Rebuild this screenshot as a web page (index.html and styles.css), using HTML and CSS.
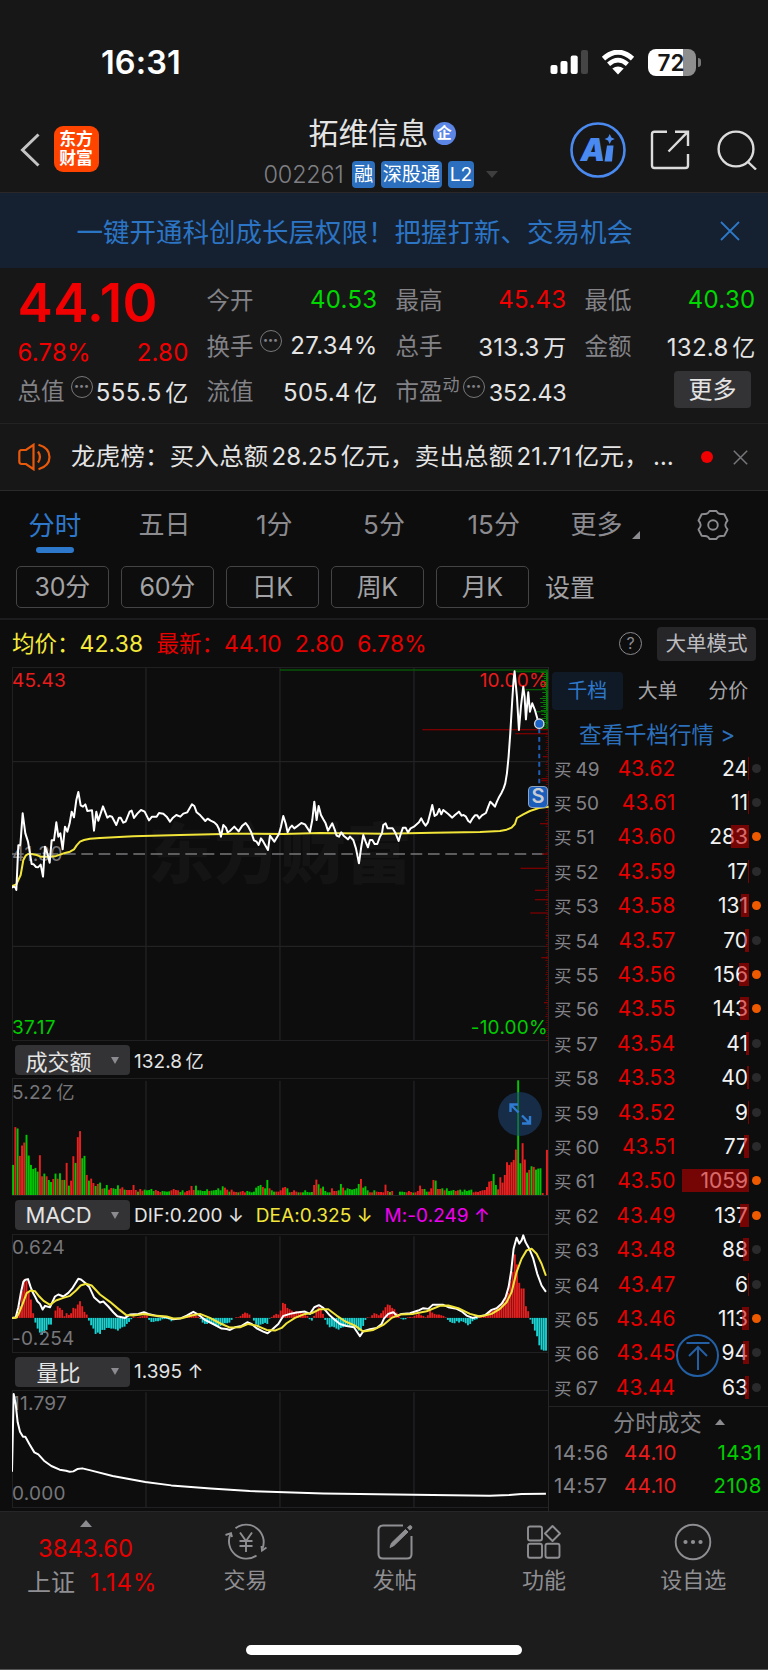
FILE: index.html
```html
<!DOCTYPE html>
<html lang="zh-CN">
<head>
    <meta charset="UTF-8">
    <title>拓维信息 002261</title>
    <link rel="stylesheet" href="styles.css">
</head>
<body>
    <div class="status-bar">
        <div class="clock">16:31</div>
        <svg class="signal" width="38" height="25" viewBox="0 0 38 25">
            <rect x="0.5" y="15" width="7" height="9" rx="2" fill="#fff"/>
            <rect x="10.5" y="11" width="7" height="13" rx="2" fill="#fff"/>
            <rect x="20.7" y="5.5" width="7" height="18.5" rx="2" fill="#fff"/>
            <rect x="31" y="0" width="7" height="24" rx="2" fill="#454545"/>
        </svg>
        <svg class="wifi" width="34" height="25" viewBox="0 0 34 25">
            <path d="M2.5 8.6 Q17 -4.2 31.5 8.6" fill="none" stroke="#fff" stroke-width="5"/>
            <path d="M7.6 14.2 Q17 6 26.4 14.2" fill="none" stroke="#fff" stroke-width="4.6"/>
            <path d="M11.3 18.6 Q17 14.4 22.7 18.6 L17 24.5 Z" fill="#fff"/>
        </svg>
        <div class="battery"><span>72</span></div>
        <div class="battery-cap"></div>
    </div>

    <header class="title-bar">
        <svg class="back" width="20" height="34" viewBox="0 0 20 34">
            <path d="M18.5 1.5 L2.5 17 L18.5 32.5" fill="none" stroke="#c4c4c4" stroke-width="3"/>
        </svg>
        <div class="app-logo">东方<br>财富</div>
        <div class="stock">
            <div class="stock-name">拓维信息<span class="badge">企</span></div>
            <div class="stock-meta">
                <span class="code">002261</span>
                <span class="tag">融</span>
                <span class="tag">深股通</span>
                <span class="tag">L2</span>
                <i class="caret"></i>
            </div>
        </div>
        <div class="actions">
            <svg width="56" height="56" viewBox="0 0 56 56">
                <circle cx="28" cy="28" r="26.5" fill="none" stroke="#4a8af0" stroke-width="2.6"/>
                <text class="ai-text" x="10.5" y="38.5">A</text>
                <path d="M37 23.5 H43.5 L42 39.5 H34.5 Z" fill="#4a8af0"/>
                <path d="M39.7 12 L41.4 15.4 L44.8 17 L41.4 18.6 L39.7 22 L38 18.6 L34.6 17 L38 15.4 Z" fill="#4a8af0"/>
            </svg>
            <svg width="40" height="40" viewBox="0 0 40 40" fill="none" stroke="#dcdcdc" stroke-width="2.4">
                <path d="M17 1.7 H4.5 Q2 1.7 2 4.2 V35.5 Q2 38 4.5 38 H35.5 Q38 38 38 35.5 V24"/>
                <path d="M25 1.7 H38 V16 M37.5 2.2 L18.5 21.5"/>
            </svg>
            <svg width="40" height="40" viewBox="0 0 40 40" fill="none" stroke="#dcdcdc" stroke-width="2.4">
                <circle cx="19" cy="19" r="17.4"/>
                <path d="M30.5 31.5 L39 39.5"/>
            </svg>
        </div>
    </header>

    <div class="banner">
        <span>一键开通科创成长层权限！把握打新、交易机会</span>
        <svg width="20" height="20" viewBox="0 0 20 20"><path d="M1 1 L19 19 M19 1 L1 19" stroke="#2e78c8" stroke-width="1.8"/></svg>
    </div>

    <section class="quote">
        <div class="price-box">
            <div class="price">44.10</div>
            <div class="change"><span>6.78%</span><span>2.80</span></div>
        </div>
        <div class="cell"><label>今开</label><b class="down">40.53</b></div>
        <div class="cell"><label>最高</label><b class="up">45.43</b></div>
        <div class="cell"><label>最低</label><b class="down">40.30</b></div>
        <div class="cell"><label>换手</label><i class="dots">•••</i><b>27.34%</b></div>
        <div class="cell"><label>总手</label><b>313.3<em>万</em></b></div>
        <div class="cell"><label>金额</label><b>132.8<em>亿</em></b></div>
        <div class="cell"><label>总值</label><i class="dots">•••</i><b>555.5<em>亿</em></b></div>
        <div class="cell"><label>流值</label><b>505.4<em>亿</em></b></div>
        <div class="cell"><label>市盈<sup>动</sup></label><i class="dots dots-pe">•••</i><b class="pe">352.43</b></div>
        <div class="cell"><button class="more">更多</button></div>
    </section>

    <div class="news">
        <svg width="33" height="28" viewBox="0 0 33 28" fill="none" stroke="#e8590c" stroke-width="2.2">
            <path d="M15.5 1.8 V26.2 L8 21 H3.5 Q1.3 21 1.3 18.5 V9.5 Q1.3 7 3.5 7 H8 Z"/>
            <path d="M20 8.5 Q23.8 14 20 19.5"/>
            <path d="M20.5 1.8 Q31.5 5 31.5 14 Q31.5 23 20.5 26.2"/>
        </svg>
        <span class="news-text">龙虎榜：买入总额<u>28.25</u>亿元，卖出总额<u>21.71</u>亿元，<u>…</u></span>
        <i class="red-dot"></i>
        <svg width="15" height="15" viewBox="0 0 15 15"><path d="M0.8 0.8 L14.2 14.2 M14.2 0.8 L0.8 14.2" stroke="#77777b" stroke-width="1.5"/></svg>
    </div>

    <nav class="tabs">
        <div class="tab active">分时</div>
        <div class="tab">五日</div>
        <div class="tab">1分</div>
        <div class="tab">5分</div>
        <div class="tab">15分</div>
        <div class="tab tab-more">更多<i></i></div>
        <div class="tab">
            <svg width="32" height="32" viewBox="0 0 32 32" fill="none" stroke="#8b8b90" stroke-width="1.9">
                <path d="M12.5 2 H19.5 Q21 5.5 24.8 5 L27.3 5.2 L30.5 11.5 Q28.3 14 28.3 16 Q28.3 18 30.5 20.5 L27.3 26.8 L24.8 27 Q21 26.5 19.5 30 H12.5 Q11 26.5 7.2 27 L4.7 26.8 L1.5 20.5 Q3.7 18 3.7 16 Q3.7 14 1.5 11.5 L4.7 5.2 L7.2 5 Q11 5.5 12.5 2 Z" stroke-linejoin="round"/>
                <circle cx="16" cy="16" r="4.8"/>
            </svg>
        </div>
    </nav>
    <div class="periods">
        <button>30分</button>
        <button>60分</button>
        <button>日K</button>
        <button>周K</button>
        <button>月K</button>
        <span>设置</span>
    </div>

    <div class="avg-row">
        <span class="avg">均价：<b>42.38</b></span>
        <span class="last">最新：<b>44.10</b><b>2.80</b><b>6.78%</b></span>
        <i class="help">?</i>
        <button class="mode">大单模式</button>
    </div>

    <main class="board">
        <div class="charts">
            <div class="pane pane-price">
                <div class="watermark">东方财富</div>
                <svg viewBox="36 21 1610 1122" preserveAspectRatio="none">
                    <path class="grid" d="M438 21 V1143 M840 21 V1143 M1242 21 V1143 M36 305 H1646 M36 859 H1646"/>
                    <path class="zero" d="M36 582 H1646"/>
                    <g id="depth"></g>
                </svg>
                <span class="lbl lt red">45.43</span>
                <span class="lbl rt red">10.00%</span>
                <span class="lbl lm">41.30</span>
                <svg viewBox="36 21 1610 1122" preserveAspectRatio="none">
                    <polyline class="line-avg" points="36,678 49,673 55,660 62,645 70,600 77,587 84,582 95,582 110,585 122,590 150,590 165,589 180,584 195,579 210,575 222,568 230,556 240,545 252,540 270,536 300,534 400,529 540,525 700,521 850,522 960,519 1152,521 1300,518 1440,516 1500,513 1520,509 1535,503 1545,492 1551,474 1570,463 1590,453 1617,444 1646,440"/>
                    <polyline class="line-price" points="36,683 41,680 46,682 49,690 55,556 61,556 68,460 76,520 84,545 90,580 95,612 101,613 108,621 114,622 122,614 129,650 135,560 142,580 149,608 155,541 162,541 169,487 175,530 181,520 188,568 195,500 202,515 209,490 215,455 222,472 229,420 235,396 242,436 249,440 256,433 262,453 276,451 282,512 289,455 295,482 309,439 322,473 329,468 336,470 349,495 357,473 362,473 370,488 377,485 389,455 395,452 402,474 412,461 423,450 434,455 447,481 456,470 470,470 477,459 490,461 500,470 510,485 519,473 529,465 541,470 550,461 562,457 576,433 583,438 590,457 601,466 616,483 623,476 632,482 643,487 651,495 657,507 663,530 670,495 678,503 683,517 690,513 703,500 716,514 727,497 737,489 745,500 753,515 762,541 770,545 776,555 783,535 790,545 804,570 810,527 823,545 837,522 843,500 850,468 857,490 863,517 870,503 876,497 883,505 890,500 904,489 915,493 930,516 937,480 943,425 950,480 956,438 963,465 970,478 977,490 984,512 997,490 1004,508 1010,527 1017,530 1024,517 1031,527 1044,538 1050,530 1060,540 1068,565 1077,610 1084,560 1090,525 1097,545 1104,562 1110,540 1117,540 1124,552 1132,552 1140,530 1146,520 1150,495 1157,490 1163,505 1178,505 1187,520 1196,543 1203,520 1209,503 1217,503 1224,517 1232,505 1242,500 1257,487 1264,475 1270,487 1277,497 1284,487 1291,460 1297,435 1304,468 1311,463 1318,447 1324,463 1330,450 1345,462 1357,473 1365,465 1377,455 1385,467 1391,465 1398,470 1405,483 1411,487 1418,475 1425,466 1432,466 1438,475 1446,466 1458,459 1465,440 1471,425 1478,432 1485,440 1491,425 1498,410 1505,398 1511,385 1516,370 1521,340 1526,290 1531,220 1537,120 1541,60 1544,34 1551,110 1557,210 1563,140 1570,80 1574,110 1578,178 1582,130 1585,97 1590,155 1597,130 1605,150 1612,175 1617,190"/>
                    <path class="sell-guide" d="M1618 206 V400"/>
                    <circle cx="1618" cy="191" r="14" fill="#1a62c4" stroke="#d8d8d8" stroke-width="4"/>
                </svg>
                <span class="sell-mark">S</span>
                <span class="lbl lb green">37.17</span>
                <span class="lbl rb green">-10.00%</span>
            </div>

            <div class="ind-row"><button class="ind"><span>成交额</span><i></i></button><p>132.8<em>亿</em></p></div>
            <div class="pane pane-vol">
                <span class="lbl lt">5.22<em>亿</em></span>
                <svg viewBox="36 115 1610 353" preserveAspectRatio="none">
                    <path class="grid" d="M438 123 V468 M840 123 V468 M1242 123 V468"/>
                    <g id="volume"></g>
                </svg>
                <div class="expand">
                    <svg width="24" height="24" viewBox="0 0 24 24" fill="none" stroke="#2f7bd0" stroke-width="2.4">
                        <path d="M2.5 10 V2.5 H10 M3 3 L10.5 10.5 M22 14 V21.5 H14 M21.5 21 L14 13.5"/>
                    </svg>
                </div>
            </div>

            <div class="ind-row"><button class="ind"><span>MACD</span><i></i></button><p>DIF:0.200 ↓</p><p class="yellow">DEA:0.325 ↓</p><p class="magenta">M:-0.249 ↑</p></div>
            <div class="pane pane-macd">
                <svg viewBox="36 581 1610 356" preserveAspectRatio="none">
                    <path class="grid" d="M438 588 V932 M840 588 V932 M1242 588 V932"/>
                    <g id="macd"></g>
                </svg>
                <span class="lbl lt">0.624</span>
                <span class="lbl lb">-0.254</span>
                <svg viewBox="36 581 1610 356" preserveAspectRatio="none">
                    <polyline class="line-price" points="36,832 47,831 55,800 62,760 70,724 76,718 84,716 92,740 98,755 105,768 112,782 120,790 128,807 135,796 142,798 150,800 157,785 165,768 175,762 190,768 205,757 218,742 235,715 243,717 255,727 268,740 282,770 300,786 310,783 325,798 340,815 352,827 375,832 390,822 415,820 432,815 445,820 470,826 500,830 520,836 540,834 560,825 580,814 595,822 615,838 635,848 650,856 665,864 680,865 690,868 705,860 725,856 742,845 755,850 770,863 790,873 803,878 815,868 835,850 850,826 870,820 890,816 915,813 930,820 943,800 957,794 970,802 990,825 1005,838 1020,850 1040,856 1062,860 1080,887 1090,872 1110,866 1130,862 1145,850 1152,834 1165,820 1180,815 1192,826 1205,820 1230,818 1255,810 1270,803 1285,805 1298,793 1330,793 1345,800 1370,805 1385,812 1400,825 1418,832 1435,828 1455,824 1475,808 1490,803 1505,790 1517,770 1526,740 1534,690 1541,625 1550,592 1558,610 1565,600 1570,585 1577,606 1588,625 1600,655 1612,700 1625,735 1638,754"/>
                    <polyline class="line-avg" points="36,832 50,831 58,815 68,790 80,758 92,750 105,752 118,768 132,782 150,793 168,780 190,772 210,766 228,750 242,735 258,730 275,735 300,762 330,784 355,805 378,823 400,825 432,820 460,825 500,828 520,834 545,833 575,825 600,820 630,832 660,848 690,861 720,860 745,850 770,855 800,868 825,870 845,862 860,848 885,832 915,820 935,818 960,806 985,806 1010,825 1035,842 1065,855 1090,873 1120,868 1150,853 1175,832 1200,822 1240,820 1280,812 1320,796 1345,795 1375,803 1410,820 1440,828 1475,820 1500,805 1520,785 1535,755 1550,695 1565,655 1580,630 1595,625 1610,640 1625,670 1638,706"/>
                </svg>
            </div>

            <div class="ind-row"><button class="ind"><span>量比</span><i></i></button><p>1.395 ↑</p></div>
            <div class="pane pane-ratio">
                <span class="lbl lt">11.797</span>
                <span class="lbl lb">0.000</span>
                <svg viewBox="36 118 1610 355" preserveAspectRatio="none">
                    <path class="grid" d="M438 125 V470 M840 125 V470 M1242 125 V470"/>
                    <polyline class="line-price" points="36,363 41,130 47,160 53,215 60,243 69,258 76,258 88,280 103,305 115,311 132,330 154,346 179,357 198,360 209,363 220,362 232,355 247,353 272,359 338,376 436,394 514,404 632,413 749,421 970,428 1242,432 1469,435 1528,433 1565,430 1638,429"/>
                </svg>
            </div>
        </div>

        <aside class="book">
            <div class="book-tabs"><span class="on">千档</span><span>大单</span><span>分价</span></div>
            <div class="book-link">查看千档行情 &gt;</div>
            <div id="orders"></div>
            <div class="ticks">
                <div class="ticks-title">分时成交<i></i></div>
                <div class="tick"><span>14:56</span><b>44.10</b><em>1431</em></div>
                <div class="tick"><span>14:57</span><b>44.10</b><em>2108</em></div>
            </div>
            <div class="to-top">
                <svg width="24" height="30" viewBox="0 0 24 30" fill="none" stroke="#235fa5" stroke-width="2">
                    <path d="M0.5 2 H23.5 M12 6 V29 M3 15 L12 6 L21 15"/>
                </svg>
            </div>
        </aside>
    </main>

    <footer class="bottom-bar">
        <div class="index">
            <i></i>
            <div class="index-val">3843.60</div>
            <div class="index-name">上证<b>1.14%</b></div>
        </div>
        <div class="item">
            <svg width="42" height="38" viewBox="0 0 42 38" fill="none" stroke="#8f8f93" stroke-width="1.9">
                <path d="M10.5 5.3 A17.5 17.5 0 0 1 37.5 25.5"/>
                <path d="M31.5 32.5 A17.5 17.5 0 0 1 5.5 11"/>
                <path d="M0.5 12 L6 10.2 L7 14 M41.5 24.5 L37 27.5 L36.5 23"/>
                <path d="M15 9.5 L21 18 L27 9.5 M21 18 V29 M14.5 18 H27.5 M14.5 23 H27.5"/>
            </svg>
            <span>交易</span>
        </div>
        <div class="item">
            <svg width="38" height="38" viewBox="0 0 38 38" fill="none" stroke="#8f8f93" stroke-width="2">
                <path d="M27 2.5 H7 Q2.5 2.5 2.5 7 V31 Q2.5 35.5 7 35.5 H31 Q35.5 35.5 35.5 31 V13"/>
                <path d="M14 24.5 L15.5 20 L29.5 6.5 L32 9 L18 22.5 Z M31.5 4.8 L33.8 2.5 Q36.5 3 35.8 5 L33.8 7 Z" fill="#8f8f93" stroke-width="1"/>
            </svg>
            <span>发帖</span>
        </div>
        <div class="item">
            <svg width="38" height="38" viewBox="0 0 38 38" fill="none" stroke="#8f8f93" stroke-width="1.9">
                <rect x="3" y="3.5" width="14" height="14" rx="2"/>
                <rect x="3" y="20.8" width="14" height="14" rx="2"/>
                <rect x="20.5" y="20.8" width="14" height="14" rx="2"/>
                <path d="M27.5 3 L35 10.5 L27.5 18 L20 10.5 Z" stroke-linejoin="round"/>
            </svg>
            <span>功能</span>
        </div>
        <div class="item">
            <svg width="38" height="38" viewBox="0 0 38 38">
                <circle cx="19" cy="19" r="17.3" fill="none" stroke="#8f8f93" stroke-width="1.9"/>
                <g fill="#8f8f93"><circle cx="11.5" cy="19" r="2.1"/><circle cx="19" cy="19" r="2.1"/><circle cx="26.5" cy="19" r="2.1"/></g>
            </svg>
            <span>设自选</span>
        </div>
        <div class="home-indicator"></div>
    </footer>

    <script>
        const NS = 'http://www.w3.org/2000/svg';
        const STEP = 6.69;

        function addRect(parent, x, y, w, h, fill) {
            const r = document.createElementNS(NS, 'rect');
            r.setAttribute('x', x);
            r.setAttribute('y', y);
            r.setAttribute('width', w);
            r.setAttribute('height', h);
            r.setAttribute('fill', fill);
            parent.appendChild(r);
        }

        // ===== VOLUME =====
        const volume = `g90 r203 g199 r117 r148 r157 g180 g118 g90 g78 g81 g70 r119 r56 g64 r56 g45 g39 r48 g64
            r49 g65 r45 g45 r96 g28 r43 r116 g96 r173 r191 g110 g117 r60 g43 r49 r36 g27 r33 g37
            r19 g20 g30 r16 r21 g20 g18 g29 r19 r23 g16 r15 r15 r15 r30 r15 g10 r18 r13 g16
            g14 g15 g18 g12 r15 r12 r9 g12 g11 g10 g11 r14 r18 r15 r14 g9 g14 r8 r12 r14
            r27 r15 g28 g14 g14 g12 g12 g17 r12 g13 g14 g15 g20 g14 g26 r22 r16 g10 r16 r10
            r9 g8 r10 r12 r8 g12 g10 g8 g10 g22 g27 g30 r24 g20 g45 r20 g14 g10 r10 r10
            r14 r22 r24 g20 g8 r9 r14 r10 g8 r8 g8 g14 g9 g8 g9 r30 r46 g32 r20 g25
            g12 g8 g8 r20 r12 r12 g14 g33 r22 g14 g20 g18 g16 g18 g20 g33 r48 g22 g26 g14
            r8 r8 g14 r10 r9 r9 r8 r31 r12 g9 r12 g10 g10 g9 r8 r12 r9 g7 r8 r12
            r28 r18 g18 g10 r10 r20 r45 g43 r18 r18 g20 r14 g20 g12 g13 g15 r12 r14 g16 g10
            g16 g12 g14 g16 r8 r10 r9 r12 r14 r15 r24 r40 r42 g63 g30 r17 r53 r37 r60 r98
            r90 r98 r105 r136 g343 g95 r155 r106 g67 r75 g86 r84 g76 g79 g80 r6`.trim().split(/\s+/);
        const volBox = document.getElementById('volume');
        // right part of the session is aligned to the close
        volume.forEach((v, i) => {
            const n = i > 170 ? i + 226.5 - volume.indexOf('g343') : i;
            const h = +v.slice(1);
            addRect(volBox, 36.5 + n * STEP, 465 - h, 5.8, h, v[0] === 'r' ? '#e82020' : '#00c800');
        });
        addRect(volBox, 1638, 330, 6, 135, '#e82020');

        // ===== MACD HISTOGRAM =====
        const macd = {
            0: [0, 0, 3, 35, 80, 115, 110, 80, 55, 14, -14, -32, -44, -50, -45, -36, -20, -20, 0, 22, 35, 30, 24, 5, 14, 9, 14, 30, 28, 40],
            30: [50, 35, 18, 10, -8, -22, -32, -48, -44, -48, -36, -36, -30, -30, -32, -32, -34, -38, -32, -28, -26, -18, -12, -4, 4, 1, 2, 4, 6, 8],
            60: [7, -6, -12, -12, -10, -10, -8, -4, -3, -3, -5, -10, -6, -2, -1, -1, 1, 3, 6, 9, 14, 12, 8, 4, -3, -14, -18, -18, -15, -14],
            90: [-18, -25, -28, -24, -20, -16, -16, -14, -6, 0, 2, 2, 6, 12, 16, 14, 10, 0, -8, -18, -24, -20, -18, -15, -18, -2, 3, 8, 12, 10],
            120: [22, 45, 42, 30, 26, 22, 18, 20, 16, 18, 14, 12, 6, -4, -8, 6, 20, 32, 24, 12, -6, -20, -28, -26, -28, -32, -35, -30, -28, -26],
            150: [-24, -26, -24, -28, -30, -38, -36, -24, -6, 2, 1, 8, 14, 12, 8, 14, 22, 32, 40, 38, 30, 26, 16, 10, -2, -5, -4, 2, 3, 2],
            180: [6, 10, 12, 8, 6, 2, 8, 22, 16, 12, 10, 10, 8, 6, 2, -6, -12, -15, -16, -10, -14, -10, -12, -16, -22, -18, -10, -6, -4, 2],
            210: [3, 6, 10, 18, 22, 22, 24, 26, 32, 40, 48, 60, 75, 110, 138, 190, 160, 105, 88, 88, 35, 20, -5, -18, -38, -55, -82, -95, -98, -98]
        };
        const macdBox = document.getElementById('macd');
        for (const start in macd) {
            macd[start].forEach((v, i) => {
                const x = 36.5 + (+start + i) * STEP;
                addRect(macdBox, x, v > 0 ? 832 - v : 832, 5.6, Math.abs(v), v > 0 ? '#e82020' : '#1ad4d4');
            });
        }

        // ===== ORDER DEPTH ALONG THE RIGHT EDGE =====
        const depthBox = document.getElementById('depth');
        for (let y = 36; y < 1143; y += 6) {
            const len = y < 208 ? 8 + (y * 7 % 17) : 2 + (y * 5 % 7);
            addRect(depthBox, 1644 - len, y, len, 3, y < 208 ? '#0a7a0a' : '#6a0000');
        }
        addRect(depthBox, 1638, 30, 6, 178, '#0a7a0a');
        const sells = [[28, 840], [33, 1548], [87, 1577], [153, 1609], [180, 1612], [192, 1604], [197, 1622], [203, 1618]];
        const buys = [[207, 1267], [219, 1546], [288, 1629], [354, 1624], [360, 1624], [489, 1620], [580, 1626],
            [623, 1562], [689, 1605], [717, 1605], [757, 1591], [824, 1637], [891, 1624], [1026, 1632]];
        sells.forEach(([y, x]) => addRect(depthBox, x, y, 1644 - x, 4, '#075c07'));
        buys.forEach(([y, x]) => addRect(depthBox, x, y, 1644 - x, 4, '#780000'));

        // ===== ORDER BOOK =====
        const qty = [24, 11, 283, 17, 131, 70, 156, 143, 41, 40, 9, 77, 1059, 137, 88, 6, 113, 94, 63];
        document.getElementById('orders').innerHTML = qty.map((q, i) => `
            <div class="order">
                <span class="lv">买<b>${49 + i}</b></span>
                <span class="px">${(43.62 - i * 0.01).toFixed(2)}</span>
                <span class="qty">${q}<i style="width:${Math.max(1, q / 1059 * 67).toFixed(1)}px"></i></span>
                <span class="dot${q >= 100 ? ' hot' : ''}"></span>
            </div>`).join('');
    </script>
</body>
</html>
```

FILE: styles.css
```css
* { margin: 0; padding: 0; box-sizing: border-box; }
body {
    width: 768px;
    height: 1670px;
    overflow: hidden;
    background: #0d0d0d;
    color: #e4e4e4;
    font-family: Inter, "Noto Sans CJK SC", sans-serif;
    font-size: 24px;
    font-weight: 400;
}
b, i, em, u { font-weight: inherit; font-style: normal; text-decoration: none; }
button { border: 0; background: none; color: inherit; font: inherit; }
svg { display: block; flex: none; }

/* ===== status bar ===== */
.status-bar {
    display: flex;
    align-items: center;
    height: 96px;
    padding: 28px 0 0 101px;
    background: #171717;
}
.clock {
    width: 449px;
    color: #fff;
    font-size: 32.5px;
    font-weight: 600;
    letter-spacing: 0.1px;
}
.wifi { margin-left: 13px; }
.battery {
    width: 48px;
    height: 27px;
    margin-left: 13px;
    border-radius: 8px;
    background: linear-gradient(90deg, #fff 73%, #8e8e8e 73%);
    color: #171717;
    font-size: 22.5px;
    font-weight: 600;
    line-height: 27px;
    text-align: center;
}
.battery span { margin-right: 2px; }
.battery-cap {
    width: 3px;
    height: 9px;
    margin-left: 1.5px;
    border-radius: 0 3px 3px 0;
    background: #777;
}

/* ===== title bar ===== */
.title-bar {
    display: flex;
    height: 97px;
    padding-left: 20px;
    border-bottom: 1px solid #2b2729;
    background: #171717;
}
.back { margin-top: 37px; }
.app-logo {
    width: 45px;
    height: 46px;
    margin: 30px 1px 0 13.5px;
    padding-top: 4px;
    border-radius: 9px;
    background: #ff4400;
    color: #fff;
    font-size: 16.8px;
    font-weight: 700;
    line-height: 19px;
    text-align: center;
}
.stock { width: 300px; margin-left: 145px; }
.stock-name {
    display: flex;
    align-items: center;
    height: 34px;
    margin: 18px 0 0 64px;
    font-size: 30px;
    letter-spacing: -0.1px;
}
.badge {
    width: 23px;
    height: 23px;
    margin: 5px 0 0 4.5px;
    border-radius: 50%;
    background: #5b86e5;
    color: #fff;
    font-size: 15px;
    font-weight: 700;
    line-height: 22px;
    text-align: center;
}
.stock-meta {
    display: flex;
    align-items: center;
    height: 27px;
    margin: 12px 0 0 19px;
    padding-top: 1px;
}
.code { width: 88.5px; color: #7f7f83; font-size: 23.5px; font-weight: 300; letter-spacing: -0.2px; }
.tag {
    height: 27px;
    margin-right: 5.5px;
    padding: 0 2px;
    border-radius: 4px;
    background: #2c6fbe;
    color: #fff;
    font-size: 19.2px;
    line-height: 26px;
}
.caret {
    margin-left: 6.5px;
    border: 6.5px solid transparent;
    border-top: 7px solid #3e3e3e;
    border-bottom: 0;
}
.actions { display: flex; align-items: center; gap: 24px; height: 97px; margin: 5px 0 0 25.5px; }
.actions svg:last-child { margin-left: 3px; }
.ai-text { fill: #4a8af0; font-size: 31px; font-weight: 900; font-style: italic; }

/* ===== banner ===== */
.banner {
    display: flex;
    align-items: center;
    height: 75px;
    padding: 0 28.5px 0 76.5px;
    background: #152130;
    color: #2c74c4;
    font-size: 26.5px;
}
.banner span { flex: 1; white-space: nowrap; }

/* ===== quote ===== */
.quote {
    display: grid;
    grid-template-columns: repeat(4, 170px);
    grid-template-rows: repeat(3, 45.7px);
    column-gap: 19px;
    height: 156px;
    padding: 9px 0 0 18.5px;
    border-bottom: 1px solid #232323;
    background: #171717;
}
.price-box { grid-row: span 2; margin-left: -1px; color: #f00000; }
.price { height: 53px; font-size: 53px; font-weight: 600; line-height: 53px; letter-spacing: 0.4px; }
.change { display: flex; justify-content: space-between; margin-top: 7px; font-size: 24px; line-height: 32px; letter-spacing: 0.2px; }
.cell { display: flex; align-items: center; white-space: nowrap; }
.cell label { margin: -2px 0 0 -1px; color: #828287; font-size: 23.5px; }
.cell label sup { font-size: 17px; line-height: 0; vertical-align: 9px; }
.cell b { margin-left: auto; font-size: 24px; letter-spacing: 0.3px; }
.cell em, .ind-row em, .lbl em { margin-left: 3.5px; font-size: 0.96em; }
.cell .pe { padding-top: 3px; font-size: 23.3px; letter-spacing: -0.2px; }
.dots {
    width: 22px;
    height: 22px;
    margin: 0 0 9px 6px;
    border: 1.5px solid #77777b;
    border-radius: 50%;
    color: #828287;
    font-size: 9px;
    line-height: 18px;
    text-align: center;
}
.dots-pe { margin-left: 3px; }
.up { color: #f00000; }
.down { color: #00d800; }
.more {
    width: 77px;
    height: 37px;
    margin: 0 4.5px 3px auto;
    border-radius: 4px;
    background: #333335;
    font-size: 24px;
    line-height: 35px;
}

/* ===== news ===== */
.news {
    display: flex;
    align-items: center;
    height: 67px;
    padding-left: 18px;
    border-bottom: 1.5px solid #2a2a2a;
    background: #171717;
}
.news-text { width: 650px; margin-top: -5px; padding-left: 20px; font-size: 24.4px; letter-spacing: 0.3px; white-space: nowrap; }
.news-text u { margin: 0 3px; font-size: 24px; letter-spacing: 0.2px; }
.news-text u:last-child { margin-left: 4px; letter-spacing: 1px; }
.red-dot { width: 12px; height: 12px; border-radius: 50%; background: #f00000; }
.news svg:last-child { margin-left: 20px; }

/* ===== period tabs ===== */
.tabs {
    display: grid;
    grid-template-columns: repeat(7, 1fr);
    height: 75px;
    padding-top: 14px;
    color: #8b8b90;
    font-size: 26px;
}
.tab { position: relative; display: flex; justify-content: center; height: 40px; line-height: 40px; }
.tab svg { margin-top: 4px; }
.tab.active { color: #2e78cc; font-size: 26.5px; }
.tab.active::after {
    content: "";
    position: absolute;
    bottom: -8px;
    width: 38px;
    height: 6px;
    border-radius: 3px;
    background: #2e78cc;
}
.tab-more { padding-left: 4px; }
.tab-more i { align-self: flex-end; margin: 0 0 6px 10px; border: 4px solid transparent; border-right-color: #8b8b90; border-bottom-color: #8b8b90; }
.periods {
    display: flex;
    gap: 11.5px;
    height: 54px;
    padding-left: 15.5px;
    border-bottom: 2px solid #1c1c1e;
    color: #a3a3a6;
    font-size: 25px;
}
.periods button {
    width: 93.5px;
    height: 42px;
    border: 1.5px solid #444446;
    border-radius: 5px;
    line-height: 41px;
    letter-spacing: -0.3px;
}
.periods span { margin-left: 4.5px; line-height: 44px; }

.avg-row {
    display: flex;
    align-items: center;
    height: 47px;
    padding: 0 12px;
    font-size: 22.5px;
    white-space: nowrap;
}
.avg { width: 144.5px; margin-top: -3px; color: #f5ea3c; }
.last { margin-top: -3px; color: #e60000; }
.avg-row b { margin-right: 13px; font-size: 22.8px; letter-spacing: 0.2px; }
.help {
    width: 23px;
    height: 23px;
    margin-left: auto;
    border: 1.5px solid #8b8b90;
    border-radius: 50%;
    color: #8b8b90;
    font-size: 16px;
    line-height: 20px;
    text-align: center;
}
.mode {
    width: 99px;
    height: 34px;
    margin-left: 15px;
    border-radius: 4px;
    background: #262628;
    color: #bdbdc0;
    font-size: 20.5px;
    line-height: 32px;
}

/* ===== charts ===== */
.board { display: flex; height: 844px; }
.charts { width: 549px; padding-left: 12px; border-right: 1px solid #262628; }
.pane { position: relative; border: 1px solid #202022; border-right: 0; }
.pane-price { height: 374px; }
.pane-vol { height: 118px; }
.pane-macd { height: 119px; }
.pane-ratio { height: 118.4px; }
.pane > svg { position: absolute; top: -1px; left: -1px; width: 536.6px; height: calc(100% + 2px); }
.grid { fill: none; stroke: #222224; stroke-width: 4; }
.zero { fill: none; stroke: #77777b; stroke-width: 4.5; stroke-dasharray: 35 17; }
.line-price { fill: none; stroke: #fff; stroke-width: 6; stroke-linejoin: round; }
.line-avg { fill: none; stroke: #f2e53a; stroke-width: 6; stroke-linejoin: round; }
.sell-guide { stroke: #1f5fb5; stroke-width: 6; stroke-dasharray: 14 11; }
.lbl { position: absolute; color: #77777b; font-size: 19px; line-height: 22px; letter-spacing: 0.25px; }
.lt { top: 2px; left: -1px; }
.rt { top: 2px; right: 0; }
.lb { bottom: 1px; left: -1px; }
.rb { bottom: 1px; right: 0; }
.lm { top: 175px; left: -1px; font-size: 19.5px; }
.pane-macd .lb, .pane-ratio .lb { bottom: 2px; }
.red { color: #e81c1c; }
.green { color: #00cc00; }
.watermark {
    position: absolute;
    top: 140px;
    left: 135px;
    color: #141414;
    font-size: 66px;
    font-weight: 900;
    line-height: 92px;
}
.sell-mark {
    position: absolute;
    top: 118px;
    right: 0;
    width: 20px;
    height: 22px;
    border: 1.5px solid #8fa3bd;
    border-radius: 4px;
    background: #1a5dba;
    color: #c8ccd2;
    font-size: 20px;
    font-weight: 600;
    line-height: 19px;
    text-align: center;
}
.ind-row { display: flex; align-items: center; gap: 12px; height: 37.3px; font-size: 19px; white-space: nowrap; }
.ind-row p { margin-top: 1px; letter-spacing: 0.05px; }
.ind-row .ind + p { margin-left: -8px; }
.ind {
    display: flex;
    align-items: center;
    width: 115px;
    height: 30px;
    margin: 1px 0 0 3px;
    padding: 0 11px 0 10px;
    border-radius: 4px;
    background: #333335;
    font-size: 22px;
}
.ind span { width: 67px; margin-top: -1px; text-align: center; }
.ind i { margin-left: auto; border: 4px solid transparent; border-top: 7px solid #8b8b90; border-bottom: 0; }
.yellow { color: #f2e53a; }
.magenta { color: #f000f0; }
.expand {
    position: absolute;
    top: 13px;
    right: 6px;
    display: grid;
    place-items: center;
    width: 44px;
    height: 44px;
    border-radius: 50%;
    background: rgba(29, 65, 110, 0.6);
}

/* ===== order book ===== */
.book { position: relative; flex: 1; }
.book-tabs { display: flex; height: 42px; margin: 5px 0 0 3px; font-size: 20px; color: #a3a3a6; }
.book-tabs span { width: 70.5px; height: 38px; line-height: 38px; text-align: center; border-radius: 4px; }
.book-tabs .on { background: #101a26; color: #2e78cc; }
.book-link { height: 37px; padding-left: 30px; color: #2c70bc; font-size: 22.5px; line-height: 41px; white-space: nowrap; }
.order { display: flex; align-items: center; height: 34.4px; padding-left: 5px; }
.lv { width: 51px; color: #828287; font-size: 17.5px; white-space: nowrap; }
.lv b { margin-left: 4px; font-size: 19px; }
.px { width: 70.5px; color: #e60000; font-size: 20.8px; text-align: right; letter-spacing: 0.2px; }
.qty { position: relative; width: 73.5px; padding-right: 1px; color: #f2f2f2; font-size: 21px; text-align: right; }
.qty i { position: absolute; top: 1px; right: 0; height: 23px; background: rgba(200, 0, 0, 0.56); }
.dot { width: 9px; height: 9px; margin-left: 2.5px; border-radius: 50%; background: #2a2a2c; }
.dot.hot { background: #ee5a00; }
.ticks { margin-top: 1.5px; border-top: 1.5px solid #232325; font-size: 20.5px; }
.ticks-title { display: flex; align-items: center; height: 29.5px; padding: 0 0 2px 64px; color: #828287; font-size: 22.2px; }
.ticks-title i { margin: 2px 0 0 13px; border: 5px solid transparent; border-top: 0; border-bottom: 6px solid #8b8b90; }
.tick { display: flex; height: 33px; padding: 0 6px 0 5px; line-height: 33px; }
.tick span { width: 70px; color: #828287; letter-spacing: 0.4px; }
.tick b { color: #e81c1c; letter-spacing: 0.3px; }
.tick em { margin-left: auto; color: #00cc00; letter-spacing: 0.5px; }
.to-top {
    position: absolute;
    top: 667px;
    left: 127px;
    display: grid;
    place-items: center;
    width: 43px;
    height: 43px;
    border: 2px solid #235fa5;
    border-radius: 50%;
}

/* ===== bottom bar ===== */
.bottom-bar {
    position: relative;
    display: grid;
    grid-template-columns: 171px repeat(4, 1fr);
    height: 159px;
    border-top: 1.5px solid #262628;
    border-bottom: 1px solid #555;
    background: #1c1c1c;
    color: #8f8f93;
    font-size: 22px;
}
.index { display: flex; flex-direction: column; align-items: center; padding-top: 8px; }
.index i { border: 6.5px solid transparent; border-top: 0; border-bottom: 7px solid #8b8b90; }
.index-val { margin-top: 5px; color: #e60000; font-size: 23.8px; line-height: 34px; }
.index-name { padding-left: 13px; font-size: 24px; line-height: 33px; white-space: nowrap; }
.index-name b { margin-left: 15px; color: #e60000; letter-spacing: 0.7px; }
.item { display: flex; flex-direction: column; align-items: center; padding-top: 11px; }
.item span { margin-top: 2px; line-height: 34px; }
.home-indicator {
    position: absolute;
    bottom: 14px;
    left: 246px;
    width: 276px;
    height: 10px;
    border-radius: 5px;
    background: #fff;
}
```
